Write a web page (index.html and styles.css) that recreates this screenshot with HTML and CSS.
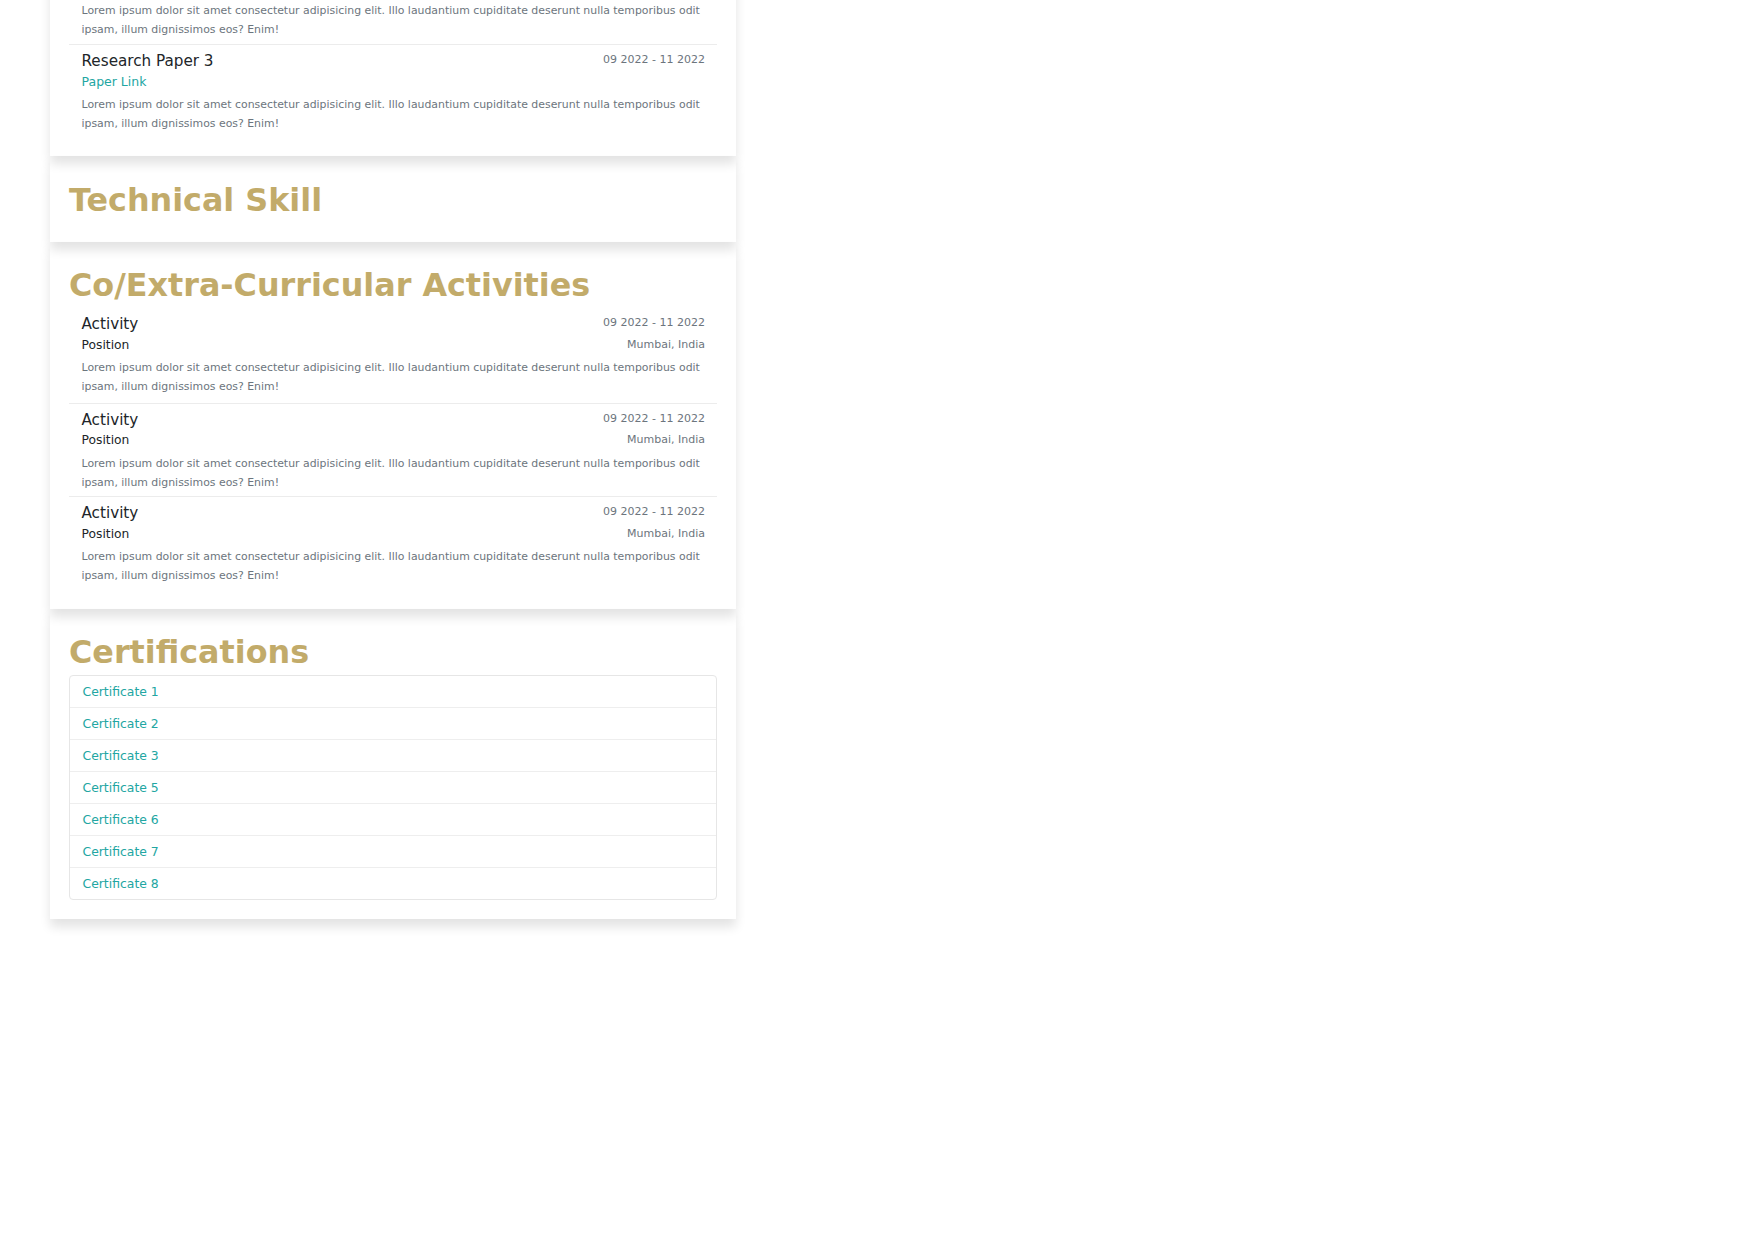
FILE: index.html
```html
<!DOCTYPE html>
<html lang="en">
<head>
<meta charset="utf-8">
<title>Resume</title>
<link rel="stylesheet" href="styles.css">
</head>
<body>
<main class="page">
  <section class="card">
    <h2 class="card-title">Research Papers</h2>
    <ul class="entries">
      <li class="entry">
        <div class="entry-row"><span class="entry-title">Research Paper 1</span><span class="entry-date">09 2022 - 11 2022</span></div>
        <div class="entry-sub"><a class="entry-link" href="#">Paper Link</a></div>
        <p class="entry-desc">Lorem ipsum dolor sit amet consectetur adipisicing elit. Illo laudantium cupiditate deserunt nulla temporibus odit ipsam, illum dignissimos eos? Enim!</p>
      </li>
      <li class="entry">
        <div class="entry-row"><span class="entry-title">Research Paper 2</span><span class="entry-date">09 2022 - 11 2022</span></div>
        <div class="entry-sub"><a class="entry-link" href="#">Paper Link</a></div>
        <p class="entry-desc">Lorem ipsum dolor sit amet consectetur adipisicing elit. Illo laudantium cupiditate deserunt nulla temporibus odit ipsam, illum dignissimos eos? Enim!</p>
      </li>
      <li class="entry">
        <div class="entry-row"><span class="entry-title">Research Paper 3</span><span class="entry-date">09 2022 - 11 2022</span></div>
        <div class="entry-sub"><a class="entry-link" href="#">Paper Link</a></div>
        <p class="entry-desc">Lorem ipsum dolor sit amet consectetur adipisicing elit. Illo laudantium cupiditate deserunt nulla temporibus odit ipsam, illum dignissimos eos? Enim!</p>
      </li>
    </ul>
  </section>

  <section class="card">
    <h2 class="card-title">Technical Skill</h2>
  </section>

  <section class="card">
    <h2 class="card-title">Co/Extra-Curricular Activities</h2>
    <ul class="entries">
      <li class="entry">
        <div class="entry-row"><span class="entry-title">Activity</span><span class="entry-date">09 2022 - 11 2022</span></div>
        <div class="entry-sub"><span class="entry-position">Position</span><span class="entry-place">Mumbai, India</span></div>
        <p class="entry-desc">Lorem ipsum dolor sit amet consectetur adipisicing elit. Illo laudantium cupiditate deserunt nulla temporibus odit ipsam, illum dignissimos eos? Enim!</p>
      </li>
      <li class="entry">
        <div class="entry-row"><span class="entry-title">Activity</span><span class="entry-date">09 2022 - 11 2022</span></div>
        <div class="entry-sub"><span class="entry-position">Position</span><span class="entry-place">Mumbai, India</span></div>
        <p class="entry-desc">Lorem ipsum dolor sit amet consectetur adipisicing elit. Illo laudantium cupiditate deserunt nulla temporibus odit ipsam, illum dignissimos eos? Enim!</p>
      </li>
      <li class="entry">
        <div class="entry-row"><span class="entry-title">Activity</span><span class="entry-date">09 2022 - 11 2022</span></div>
        <div class="entry-sub"><span class="entry-position">Position</span><span class="entry-place">Mumbai, India</span></div>
        <p class="entry-desc">Lorem ipsum dolor sit amet consectetur adipisicing elit. Illo laudantium cupiditate deserunt nulla temporibus odit ipsam, illum dignissimos eos? Enim!</p>
      </li>
    </ul>
  </section>

  <section class="card">
    <h2 class="card-title">Certifications</h2>
    <ul class="cert-list">
      <li class="cert-item"><a class="cert-link" href="#">Certificate 1</a></li>
      <li class="cert-item"><a class="cert-link" href="#">Certificate 2</a></li>
      <li class="cert-item"><a class="cert-link" href="#">Certificate 3</a></li>
      <li class="cert-item"><a class="cert-link" href="#">Certificate 5</a></li>
      <li class="cert-item"><a class="cert-link" href="#">Certificate 6</a></li>
      <li class="cert-item"><a class="cert-link" href="#">Certificate 7</a></li>
      <li class="cert-item"><a class="cert-link" href="#">Certificate 8</a></li>
    </ul>
  </section>
</main>
</body>
</html>
```

FILE: styles.css
```css
html, body {
  margin: 0;
  padding: 0;
  background: #ffffff;
}

body {
  font-family: "DejaVu Sans", Verdana, sans-serif;
  color: #212529;
  min-height: 1300px;
}

.page {
  width: 686px;
  margin: -210.7px 0 80px 50px;
  display: flex;
  flex-direction: column;
}

.card {
  padding: 19px;
  background: transparent;
  box-shadow: 0 8px 10px rgba(0, 0, 0, 0.11);
}

.card-title {
  margin: 2.5px 0 0 0;
  font-size: 31.8px;
  line-height: 44.8px;
  font-weight: bold;
  color: #c2ab6a;
}

.entries {
  list-style: none;
  margin: 0;
  padding: 0;
}

.entry {
  border-top: 1px solid #ececec;
  padding: 5px 12px 4.6px 12.5px;
}

.entry:first-child {
  border-top-color: transparent;
  padding-top: 4px;
  padding-bottom: 6.6px;
}

.entry-row,
.entry-sub {
  display: flex;
  justify-content: space-between;
  align-items: flex-start;
}

.entry-title {
  font-size: 15.2px;
  line-height: 22.8px;
  color: #212529;
}

.entry-date {
  font-size: 11px;
  line-height: 20.5px;
  color: #6c757d;
}

.entry-position {
  font-size: 12.3px;
  line-height: 18.6px;
  color: #212529;
}

.entry-link {
  font-size: 12.5px;
  line-height: 18.6px;
  color: #22a6a2;
  text-decoration: none;
}

.entry-place {
  font-size: 11px;
  line-height: 17px;
  color: #6c757d;
}

.entry-desc {
  margin: 3.6px 0 0 0;
  font-size: 10.9px;
  line-height: 19px;
  color: #6c757d;
}

.cert-list {
  list-style: none;
  margin: 0;
  padding: 0;
  border: 1px solid #e6e6e6;
  border-radius: 4px;
}

.cert-item {
  padding: 6px 12.5px;
  font-size: 12.4px;
  line-height: 19px;
  border-top: 1px solid #eeeeee;
}

.cert-item:first-child {
  border-top: none;
}

.cert-link {
  color: #22a6a2;
  text-decoration: none;
}
```
